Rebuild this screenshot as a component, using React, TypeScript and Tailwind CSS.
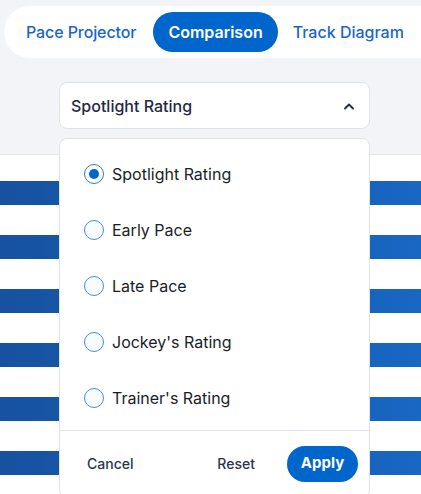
import React from "react";

const options = ["Spotlight Rating", "Early Pace", "Late Pace", "Jockey's Rating", "Trainer's Rating"];

export default function App() {
  return (
    <div
      className="relative w-[421px] h-[494px] overflow-hidden bg-[#f3f4f8]"
      style={{ fontFamily: "Inter, 'Noto Sans', sans-serif" }}
    >
      {/* Tabs */}
      <div className="pt-[6px] pl-[4px]">
        <div className="flex items-center h-[52px] w-[440px] rounded-full bg-white pl-[6px]">
          <button className="h-[40px] px-[16px] text-[16px] font-medium text-[#1a66c8] tracking-[-0.1px]">Pace Projector</button>
          <button className="h-[40px] ml-[1px] px-[15px] rounded-full bg-[#0066cc] text-[16px] font-semibold text-white">Comparison</button>
          <button className="h-[40px] pl-[15px] pr-[16px] text-[16px] font-medium text-[#1a66c8]">Track Diagram</button>
        </div>
      </div>

      {/* Trigger */}
      <div className="mt-[24px] ml-[59px] w-[311px] h-[47px] rounded-[8px] border border-[#dde3ea] bg-white flex items-center justify-between pl-[11px] pr-[14px]">
        <span className="text-[16px] font-medium text-[#1f2a44]">Spotlight Rating</span>
        <svg width="12" height="8" viewBox="0 0 12 8" fill="none">
          <path d="M2 6.5 L6 2.5 L10 6.5" stroke="#1f2a44" strokeWidth="1.8" strokeLinecap="round" strokeLinejoin="round" />
        </svg>
      </div>

      {/* Lower content */}
      <div className="mt-[25px] border-t border-[#e2e7ee] bg-white h-[400px] pt-[26px] flex flex-col gap-[30px]">
        {[0, 1, 2, 3, 4, 5].map((i) => (
          <div key={i} className="h-[24px] w-full bg-gradient-to-r from-[#1652a0] to-[#1867c3]" />
        ))}
      </div>

      {/* Dropdown panel */}
      <div className="absolute left-[59px] top-[138px] w-[311px] h-[360px] rounded-[8px] border border-[#dde3ea] bg-white">
        <div className="pt-[7px]">
          {options.map((o, i) => (
            <div key={o} className="h-[56px] flex items-center pl-[24px] gap-[8px]">
              <span
                className={
                  i === 0
                    ? "w-[20px] h-[20px] rounded-full border-[1.5px] border-[#2d7ad6] bg-white flex items-center justify-center"
                    : "w-[20px] h-[20px] rounded-full border-[1.5px] border-[#4a8ce0] bg-[#f8fbff]"
                }
              >
                {i === 0 && <span className="w-[10px] h-[10px] rounded-full bg-[#0066cc]" />}
              </span>
              <span className="text-[16px] text-[#1a1d29]">{o}</span>
            </div>
          ))}
        </div>
        <div className="mt-[4px] border-t border-[#dde3ea] flex items-center h-[66px] pl-[27px] pr-[11px]">
          <button className="text-[14px] font-medium text-[#2a3550]">Cancel</button>
          <button className="ml-auto text-[14px] font-medium text-[#2a3550]">Reset</button>
          <button className="ml-[32px] h-[36px] w-[71px] rounded-full bg-[#0066cc] text-[15px] font-bold text-white">Apply</button>
        </div>
      </div>
    </div>
  );
}
